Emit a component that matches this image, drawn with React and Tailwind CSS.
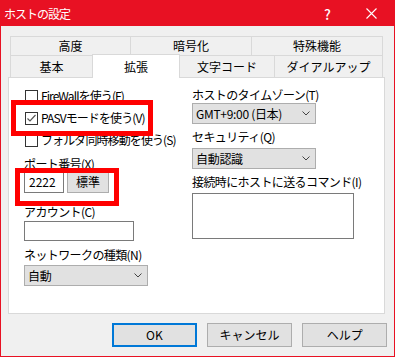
import React from 'react';

const font = { fontFamily: '"Noto Sans CJK JP", "Noto Sans", sans-serif' };

const Chevron = () => (
  <svg width="8" height="5" viewBox="0 0 8 5" className="shrink-0">
    <polyline points="0.5,0.5 4,4 7.5,0.5" fill="none" stroke="#444" strokeWidth="1" />
  </svg>
);

const Check = ({ checked, label }) => (
  <div className="flex items-center h-[22px]">
    <div className="w-[13px] h-[13px] border border-[#333] bg-white flex items-center justify-center">
      {checked && (
        <svg width="11" height="11" viewBox="0 0 11 11">
          <polyline points="1.5,5.5 4,8 9.5,2" fill="none" stroke="#555" strokeWidth="1.2" />
        </svg>
      )}
    </div>
    <span className="ml-[3px] text-[12px] leading-[14px] tracking-[-0.9px] whitespace-nowrap">{label}</span>
  </div>
);

const Select = ({ value, w, mt }) => (
  <div className={`${w} ${mt} h-[21px] bg-[#e1e1e1] border border-[#adadad] flex items-center justify-between pl-[3px] pr-[5px]`}>
    <span className="text-[12px] leading-[14px] tracking-[-0.3px]">{value}</span>
    <Chevron />
  </div>
);

const Label = ({ children, mt }) => (
  <div className={`${mt} h-[14px] text-[12px] leading-[14px] tracking-[-0.6px] whitespace-nowrap`}>{children}</div>
);

const Tab = ({ children, cls }) => (
  <div className={`${cls} flex items-center justify-center text-[12px] leading-[14px] border-[#d9d9d9]`}>{children}</div>
);

const Btn = ({ children, cls }) => (
  <div className={`${cls} h-[24px] bg-[#e1e1e1] flex items-center justify-center text-[12px] leading-[14px]`}>{children}</div>
);

export default function App() {
  return (
    <div style={font} className="w-[395px] h-[357px] bg-[#f0f0f0] border border-[#e81123] flex flex-col text-black overflow-hidden">
      <div className="h-[25px] bg-[#e81123] flex items-center text-white shrink-0">
        <span className="ml-[3px] text-[12px] leading-[14px] tracking-[-1px]">ホストの設定</span>
        <span className="ml-auto text-[14px] leading-[14px] font-medium">?</span>
        <svg width="11" height="11" viewBox="0 0 11 11" className="ml-[35px] mr-[17px]">
          <path d="M0.5 0.5 L10.5 10.5 M10.5 0.5 L0.5 10.5" stroke="#fff" strokeWidth="1.1" />
        </svg>
      </div>

      <div className="px-[7px] pt-[10px] flex flex-col">
        <div className="ml-[2px] flex flex-col">
          <div className="flex h-[19px]">
            <Tab cls="w-[120px] border-t border-l">高度</Tab>
            <Tab cls="w-[121px] border-t border-l">暗号化</Tab>
            <Tab cls="w-[132px] border-t border-l border-r">特殊機能</Tab>
          </div>
          <div className="flex h-[22px]">
            <Tab cls="w-[82px] border-t border-l">基本</Tab>
            <Tab cls="relative z-10 w-[88px] h-[24px] -mt-[1px] border-t border-l border-r bg-white">拡張</Tab>
            <Tab cls="w-[95px] border-t border-r">文字コード</Tab>
            <Tab cls="w-[108px] border-t border-r">ダイアルアップ</Tab>
          </div>
        </div>

        <div className="relative w-[377px] h-[237px] bg-white border border-[#d9d9d9] flex pl-[15px]">
          <div className="w-[168px] flex flex-col pt-[7px]">
            <div className="ml-[1px] flex flex-col">
              <Check label="FireWallを使う(F)" />
              <Check checked label="PASVモードを使う(V)" />
              <Check label="フォルダ同時移動を使う(S)" />
            </div>
            <Label mt="mt-[6px]">ポート番号(X)</Label>
            <div className="flex">
              <div className="w-[40px] h-[22px] border border-[#7a7a7a] bg-white flex items-center pl-[4px] text-[12px] leading-[14px]">2222</div>
              <div className="ml-[3px] w-[42px] h-[22px] bg-[#e1e1e1] border border-[#adadad] flex items-center justify-center text-[12px] leading-[14px]">標準</div>
            </div>
            <Label mt="mt-[12px]">アカウント(C)</Label>
            <div className="mt-[2px] w-[110px] h-[20px] border border-[#7a7a7a] bg-white" />
            <Label mt="mt-[7px]">ネットワークの種類(N)</Label>
            <Select value="自動" w="w-[124px]" mt="mt-[3px]" />
          </div>

          <div className="flex flex-col pt-[10px]">
            <Label mt="mt-0">ホストのタイムゾーン(T)</Label>
            <Select value="GMT+9:00 (日本)" w="w-[124px]" mt="mt-[1px]" />
            <Label mt="mt-[6px]">セキュリティ(Q)</Label>
            <Select value="自動認識" w="w-[124px]" mt="mt-[4px]" />
            <Label mt="mt-[6px]">接続時にホストに送るコマンド(I)</Label>
            <div className="mt-[4px] w-[162px] h-[46px] border border-[#7a7a7a] bg-white" />
          </div>

          <div className="absolute left-[2px] top-[22px] w-[142px] h-[36px] border-[5px] border-[#ff0000]" />
          <div className="absolute left-[6px] top-[90px] w-[104px] h-[38px] border-[5px] border-[#ff0000]" />
        </div>

        <div className="flex mt-[9px]">
          <Btn cls="ml-[104px] w-[85px] border-2 border-[#0078d7]">OK</Btn>
          <Btn cls="ml-[10px] w-[86px] border border-[#adadad]">キャンセル</Btn>
          <Btn cls="ml-[10px] w-[85px] border border-[#adadad]">ヘルプ</Btn>
        </div>
      </div>
    </div>
  );
}
